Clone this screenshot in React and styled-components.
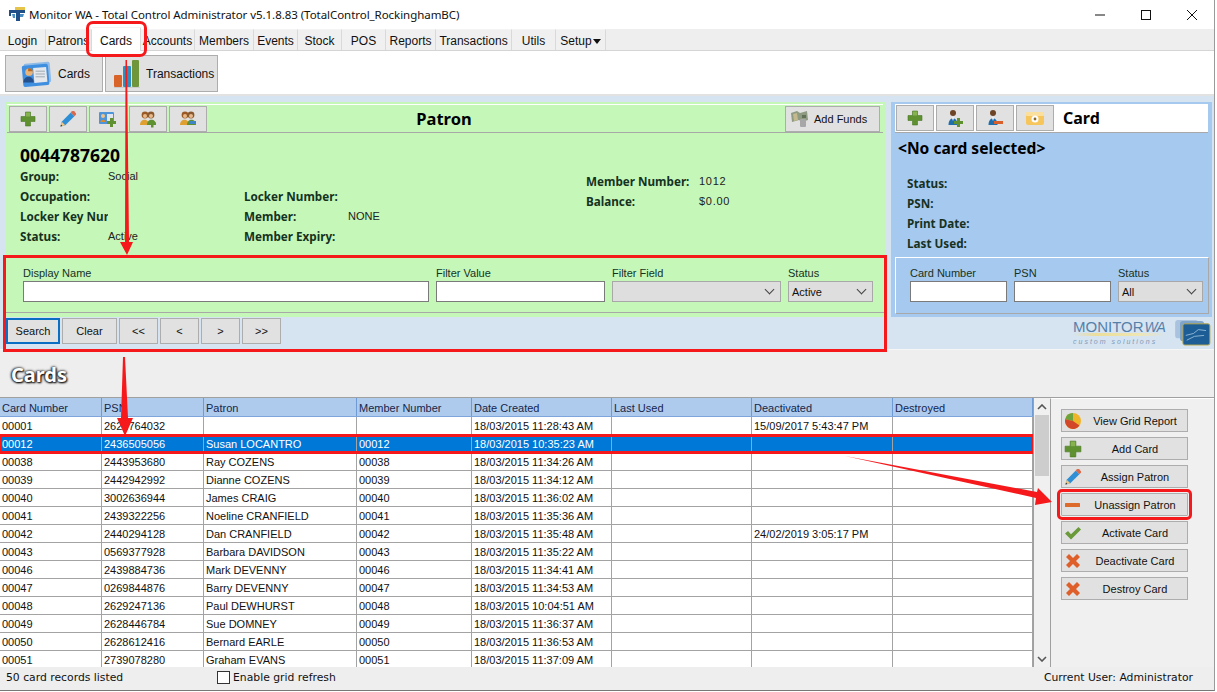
import React from 'react';
import styled, { createGlobalStyle } from 'styled-components';

const GlobalStyle = createGlobalStyle`
    html, body {
        margin: 0;
        padding: 0;
        background: #fff;
    }
    * {
        box-sizing: border-box;
    }
`;

const UI_FONT = `"Liberation Sans", Arial, sans-serif`;
const BOLD_FONT = `"Noto Sans", "Open Sans", sans-serif`;
const RED = '#f5191c';

/* ---------- icons ---------- */

const PlusIcon = ({ size = 16 }) => (
    <svg width={size} height={size} viewBox="0 0 16 16">
        <path d="M5.5 1h5v4.5H15v5h-4.5V15h-5v-4.5H1v-5h4.5z" fill="#5f9130" stroke="#4b7a25" strokeWidth="0.6" />
        <path d="M6 1.5h4v4H6z" fill="#86b34e" />
    </svg>
);

const PencilIcon = ({ size = 18 }) => (
    <svg width={size} height={size} viewBox="0 0 18 18">
        <path d="M1.5 16.5l1.2-4.8L11.8 2.6l3.6 3.6-9.1 9.1z" fill="#2f8fd6" />
        <path d="M1.5 16.5l1.2-4.8 3.6 3.6z" fill="#f3c77d" />
        <path d="M1.5 16.5l.5-2 1.5 1.5z" fill="#333" />
        <path d="M11.8 2.6l1.3-1.3c.6-.5 1.4-.5 2 0l1.6 1.6c.5.6.5 1.4 0 2l-1.3 1.3z" fill="#d9694a" />
    </svg>
);

const CardAddIcon = () => (
    <svg width="20" height="18" viewBox="0 0 20 18">
        <rect x="1" y="2" width="15" height="12" rx="1" fill="#4e94d8" />
        <rect x="9" y="4" width="6" height="7" fill="#dfe6ee" />
        <circle cx="5" cy="6" r="2" fill="#eec38a" />
        <path d="M2.5 12c0-3 5-3 5 0z" fill="#d98a2b" />
        <path d="M12 8h3v3h3v3h-3v3h-3v-3H9v-3h3z" fill="#5f9130" />
    </svg>
);

const PeopleIcon = ({ badge }) => (
    <svg width="20" height="18" viewBox="0 0 20 18">
        <circle cx="7" cy="5" r="3.4" fill="#9a5a26" />
        <circle cx="13" cy="5" r="3.4" fill="#8a5a2e" />
        <circle cx="7" cy="6" r="2" fill="#e8b98a" />
        <circle cx="13" cy="6" r="2" fill="#e8b98a" />
        <path d="M2 15c0-7 9-7 9 0z" fill="#e0a030" />
        <path d="M9 15c0-7 9-7 9 0z" fill="#5f9130" />
        {badge === 'add' ? (
            <path d="M13 10h2.5v2.5H18V15h-2.5v2.5H13V15h-2.5v-2.5H13z" fill="#5f9130" />
        ) : (
            <path d="M12 11h6v3h-6z" fill="#3f86c6" />
        )}
    </svg>
);

const PersonIcon = ({ badge }) => (
    <svg width="18" height="20" viewBox="0 0 18 20">
        <circle cx="7" cy="5" r="3" fill="#6d4526" />
        <path d="M2.5 17c0-9 9-9 9 0z" fill="#1f6fae" />
        <path d="M5.5 9h3l-1.5 4z" fill="#e9eef2" />
        {badge === 'add' ? (
            <path d="M11 10h3v3h3v3h-3v3h-3v-3H8v-3h3z" fill="#5f9130" />
        ) : (
            <path d="M8 13h9v3H8z" fill="#d9602a" />
        )}
    </svg>
);

const CameraCardIcon = () => (
    <svg width="20" height="16" viewBox="0 0 20 16">
        <rect x="1" y="2" width="18" height="13" rx="2" fill="#f6c65c" />
        <rect x="1" y="2" width="18" height="4" rx="1" fill="#fbdf9c" />
        <circle cx="10" cy="9" r="3.5" fill="#fff" />
        <circle cx="10" cy="9" r="1.4" fill="#8a6a2a" />
    </svg>
);

const MoneyIcon = () => (
    <svg width="20" height="20" viewBox="0 0 20 20">
        <path d="M1 4l6-2 3 2 7-2 1 9-6 2-3-2-7 2z" fill="#8f9a83" />
        <path d="M3 5l4-1 1 7-4 1z" fill="#c4b88c" />
        <rect x="10" y="10" width="6" height="8" rx="1" fill="#a7a7a7" />
        <path d="M12 6h4v3h-4z" fill="#62705a" />
    </svg>
);

const PieIcon = () => (
    <svg width="18" height="18" viewBox="0 0 18 18">
        <circle cx="9" cy="9" r="8" fill="#f0b429" />
        <path d="M9 9L1.2 7.2A8 8 0 0 1 9 1z" fill="#6da33c" />
        <path d="M9 9l6.5 4.6A8 8 0 0 1 1.2 7.2z" fill="#d2462a" />
    </svg>
);

const MinusIcon = () => (
    <svg width="18" height="18" viewBox="0 0 18 18">
        <rect x="1" y="7" width="15" height="4" rx="0.5" fill="#dd6a2a" />
    </svg>
);

const CheckIcon = () => (
    <svg width="18" height="18" viewBox="0 0 18 18">
        <path d="M1 9.5l3-2.5 3 3.2L14.5 3 17 5.5 7 15.5z" fill="#6a9a3a" />
    </svg>
);

const CrossIcon = () => (
    <svg width="16" height="16" viewBox="0 0 16 16">
        <path d="M1 4l3-3 4 4 4-4 3 3-4 4 4 4-3 3-4-4-4 4-3-3 4-4z" fill="#de5f2a" />
    </svg>
);

const CardsBigIcon = () => (
    <svg width="31" height="28" viewBox="0 0 32 30">
        <rect x="3" y="3" width="28" height="22" rx="2" fill="#8fbbe6" transform="rotate(-5 17 14)" />
        <rect x="1" y="5" width="28" height="23" rx="2" fill="#3f8fe0" transform="rotate(-5 15 16)" />
        <rect x="13" y="8" width="14" height="16" fill="#e4e8ec" transform="rotate(-5 20 16)" />
        <path d="M15 12h10M15 15h10M15 18h10" stroke="#9aa5ad" strokeWidth="1" />
        <circle cx="8" cy="13" r="4" fill="#e9b47a" />
        <path d="M7 9a4 4 0 0 1 5 3l-5 0z" fill="#b8681f" />
        <path d="M2 24c0-8 11-8 11 0z" fill="#234f8c" />
    </svg>
);

const BarsBigIcon = () => (
    <svg width="26" height="28" viewBox="0 0 26 28">
        <rect x="0" y="15" width="8" height="12" rx="1" fill="#d8642a" />
        <rect x="9" y="6" width="8" height="21" rx="1" fill="#2f8fbf" />
        <rect x="18" y="0" width="7" height="27" rx="1" fill="#70963c" />
        <path d="M0 27.5h26" stroke="#ccc" strokeWidth="1" />
    </svg>
);

const AppIcon = () => (
    <svg width="17" height="15" viewBox="0 0 17 15">
        <rect x="6" y="0" width="10" height="3" fill="#e6c44a" />
        <path d="M0 3h16v3h-5v8H7V6H2v3H0z" fill="#1f4f86" />
        <path d="M3 7h3v4H4z" fill="#4a8fc4" />
        <path d="M11 7h4l-1 3h-3z" fill="#4a8fc4" />
    </svg>
);

const LogoCardsIcon = () => (
    <svg width="37" height="27" viewBox="0 0 38 28">
        <rect x="0" y="1" width="24" height="19" rx="3" fill="#a9c2de" />
        <rect x="5" y="2" width="25" height="21" rx="3" fill="#7fa4cc" />
        <rect x="8" y="5" width="28" height="22" rx="2" fill="#1c5d96" stroke="#b9a94a" strokeWidth="1" />
        <path d="M11 17l8-2 5-4 8 1M12 22l8-4 10-1" stroke="#a9cbe4" strokeWidth="0.8" fill="none" />
    </svg>
);

/* ---------- page ---------- */

const menuItems = [
    ['Login', 46], ['Patrons', 46], ['Cards', 49], ['Accounts', 54], ['Members', 59],
    ['Events', 44], ['Stock', 44], ['POS', 44], ['Reports', 50], ['Transactions', 76],
    ['Utils', 44], ['Setup', 50],
];

const columns = ['Card Number', 'PSN', 'Patron', 'Member Number', 'Date Created', 'Last Used', 'Deactivated', 'Destroyed'];

const cards = [
    ['00001', '2621764032', '', '', '18/03/2015 11:28:43 AM', '', '15/09/2017 5:43:47 PM', ''],
    ['00012', '2436505056', 'Susan LOCANTRO', '00012', '18/03/2015 10:35:23 AM', '', '', ''],
    ['00038', '2443953680', 'Ray COZENS', '00038', '18/03/2015 11:34:26 AM', '', '', ''],
    ['00039', '2442942992', 'Dianne COZENS', '00039', '18/03/2015 11:34:12 AM', '', '', ''],
    ['00040', '3002636944', 'James CRAIG', '00040', '18/03/2015 11:36:02 AM', '', '', ''],
    ['00041', '2439322256', 'Noeline CRANFIELD', '00041', '18/03/2015 11:35:36 AM', '', '', ''],
    ['00042', '2440294128', 'Dan CRANFIELD', '00042', '18/03/2015 11:35:48 AM', '', '24/02/2019 3:05:17 PM', ''],
    ['00043', '0569377928', 'Barbara DAVIDSON', '00043', '18/03/2015 11:35:22 AM', '', '', ''],
    ['00046', '2439884736', 'Mark DEVENNY', '00046', '18/03/2015 11:34:41 AM', '', '', ''],
    ['00047', '0269844876', 'Barry DEVENNY', '00047', '18/03/2015 11:34:53 AM', '', '', ''],
    ['00048', '2629247136', 'Paul DEWHURST', '00048', '18/03/2015 10:04:51 AM', '', '', ''],
    ['00049', '2628446784', 'Sue DOMNEY', '00049', '18/03/2015 11:36:37 AM', '', '', ''],
    ['00050', '2628612416', 'Bernard EARLE', '00050', '18/03/2015 11:36:53 AM', '', '', ''],
    ['00051', '2739078280', 'Graham EVANS', '00051', '18/03/2015 11:37:09 AM', '', '', ''],
];

const actions = [
    ['View Grid Report', <PieIcon />],
    ['Add Card', <PlusIcon size={18} />],
    ['Assign Patron', <PencilIcon />],
    ['Unassign Patron', <MinusIcon />, true],
    ['Activate Card', <CheckIcon />],
    ['Deactivate Card', <CrossIcon />],
    ['Destroy Card', <CrossIcon />],
];

const App = () => {
    return (
        <React.Fragment>
            <GlobalStyle />
            <Screen>
                <Window>
                    <TitleBar>
                        <AppIcon />
                        <TitleText>Monitor WA - Total Control Administrator v5.1.8.83 (TotalControl_RockinghamBC)</TitleText>
                        <WindowControls>
                            <svg width="12" height="12" viewBox="0 0 12 12"><path d="M1 6h10" stroke="#111" /></svg>
                            <svg width="12" height="12" viewBox="0 0 12 12"><rect x="1.5" y="1.5" width="9" height="9" fill="none" stroke="#111" /></svg>
                            <svg width="12" height="12" viewBox="0 0 12 12"><path d="M1 1l10 10M11 1L1 11" stroke="#111" /></svg>
                        </WindowControls>
                    </TitleBar>

                    <MenuBar>
                        {menuItems.map(([label, width]) => (
                            <MenuTab key={label} $width={width} $active={label === 'Cards'}>
                                {label}
                                {label === 'Setup' && <SetupCaret />}
                            </MenuTab>
                        ))}
                    </MenuBar>

                    <Ribbon>
                        <RibbonButton $width={98} $pad={15}>
                            <CardsBigIcon />
                            Cards
                        </RibbonButton>
                        <RibbonButton $width={113} $pad={8}>
                            <BarsBigIcon />
                            Transactions
                        </RibbonButton>
                    </Ribbon>

                    <TopArea>
                        <LeftColumn>
                            <PatronPanel>
                                <PatronToolbar>
                                    <ToolButton><PlusIcon /></ToolButton>
                                    <ToolButton><PencilIcon /></ToolButton>
                                    <ToolButton><CardAddIcon /></ToolButton>
                                    <ToolButton><PeopleIcon badge="add" /></ToolButton>
                                    <ToolButton><PeopleIcon badge="link" /></ToolButton>
                                    <PanelTitle>Patron</PanelTitle>
                                    <AddFunds>
                                        <MoneyIcon />
                                        Add Funds
                                    </AddFunds>
                                </PatronToolbar>
                                <PatronBody>
                                    <PatronId>0044787620</PatronId>
                                    <PatronColumns>
                                        <InfoColumn $width={224}>
                                            <InfoRow>
                                                <InfoLabel $width={88}>Group:</InfoLabel>
                                                <InfoValue>Social</InfoValue>
                                            </InfoRow>
                                            <InfoRow><InfoLabel $width={88}>Occupation:</InfoLabel></InfoRow>
                                            <InfoRow>
                                                <InfoLabel $width={88}>Locker Key Number:</InfoLabel>
                                            </InfoRow>
                                            <InfoRow>
                                                <InfoLabel $width={88}>Status:</InfoLabel>
                                                <InfoValue>Active</InfoValue>
                                            </InfoRow>
                                        </InfoColumn>
                                        <InfoColumn $width={342} $offset={20}>
                                            <InfoRow><InfoLabel $width={104}>Locker Number:</InfoLabel></InfoRow>
                                            <InfoRow>
                                                <InfoLabel $width={104}>Member:</InfoLabel>
                                                <InfoValue>NONE</InfoValue>
                                            </InfoRow>
                                            <InfoRow><InfoLabel $width={104}>Member Expiry:</InfoLabel></InfoRow>
                                        </InfoColumn>
                                        <InfoColumn $width={200} $offset={5}>
                                            <InfoRow>
                                                <InfoLabel $width={113}>Member Number:</InfoLabel>
                                                <InfoValue $wide>1012</InfoValue>
                                            </InfoRow>
                                            <InfoRow>
                                                <InfoLabel $width={113}>Balance:</InfoLabel>
                                                <InfoValue $wide>$0.00</InfoValue>
                                            </InfoRow>
                                        </InfoColumn>
                                    </PatronColumns>
                                </PatronBody>
                            </PatronPanel>

                            <FilterBlock>
                                <PatronFilter>
                                    <Field $width={406}>
                                        <FieldLabel>Display Name</FieldLabel>
                                        <TextBox />
                                    </Field>
                                    <Field $width={169}>
                                        <FieldLabel>Filter Value</FieldLabel>
                                        <TextBox />
                                    </Field>
                                    <Field $width={169}>
                                        <FieldLabel>Filter Field</FieldLabel>
                                        <SelectBox />
                                    </Field>
                                    <Field $width={85}>
                                        <FieldLabel>Status</FieldLabel>
                                        <SelectBox>Active</SelectBox>
                                    </Field>
                                </PatronFilter>
                                <SearchRow>
                                    <SearchButton $width={54} $focused>Search</SearchButton>
                                    <SearchButton $width={55}>Clear</SearchButton>
                                    <SearchButton $width={39}>&lt;&lt;</SearchButton>
                                    <SearchButton $width={39}>&lt;</SearchButton>
                                    <SearchButton $width={39}>&gt;</SearchButton>
                                    <SearchButton $width={39}>&gt;&gt;</SearchButton>
                                </SearchRow>
                            </FilterBlock>
                        </LeftColumn>

                        <RightColumn>
                            <CardPanel>
                                <CardToolbar>
                                    <ToolButton><PlusIcon /></ToolButton>
                                    <ToolButton><PersonIcon badge="add" /></ToolButton>
                                    <ToolButton><PersonIcon badge="remove" /></ToolButton>
                                    <ToolButton><CameraCardIcon /></ToolButton>
                                    <CardTitle>Card</CardTitle>
                                </CardToolbar>
                                <NoCard>&lt;No card selected&gt;</NoCard>
                                <CardInfo>
                                    <InfoLabel>Status:</InfoLabel>
                                    <InfoLabel>PSN:</InfoLabel>
                                    <InfoLabel>Print Date:</InfoLabel>
                                    <InfoLabel>Last Used:</InfoLabel>
                                </CardInfo>
                                <CardFilter>
                                    <Field $width={97}>
                                        <FieldLabel>Card Number</FieldLabel>
                                        <TextBox />
                                    </Field>
                                    <Field $width={97}>
                                        <FieldLabel>PSN</FieldLabel>
                                        <TextBox />
                                    </Field>
                                    <Field $width={85}>
                                        <FieldLabel>Status</FieldLabel>
                                        <SelectBox>All</SelectBox>
                                    </Field>
                                </CardFilter>
                            </CardPanel>
                            <LogoRow>
                                <LogoText>
                                    <LogoName>MONITOR<LogoWa>WA</LogoWa></LogoName>
                                    <LogoTag>custom solutions</LogoTag>
                                </LogoText>
                                <LogoCardsIcon />
                            </LogoRow>
                        </RightColumn>
                    </TopArea>

                    <SectionBand>
                        <SectionTitle>Cards</SectionTitle>
                    </SectionBand>

                    <GridArea>
                        <Grid>
                            <GridHeader>
                                {columns.map((c) => <HeaderCell key={c}>{c}</HeaderCell>)}
                            </GridHeader>
                            {cards.map((card) => (
                                <GridRow key={card[0]} $selected={card[0] === '00012'}>
                                    {card.map((value, i) => <GridCell key={i}>{value}</GridCell>)}
                                </GridRow>
                            ))}
                        </Grid>
                        <ScrollBar>
                            <ScrollArrow>
                                <svg width="10" height="6" viewBox="0 0 10 6"><path d="M1 5l4-4 4 4" fill="none" stroke="#555" strokeWidth="1.6" /></svg>
                            </ScrollArrow>
                            <ScrollThumb />
                            <ScrollArrow $bottom>
                                <svg width="10" height="6" viewBox="0 0 10 6"><path d="M1 1l4 4 4-4" fill="none" stroke="#555" strokeWidth="1.6" /></svg>
                            </ScrollArrow>
                        </ScrollBar>
                        <ActionPanel>
                            {actions.map(([label, icon, marked]) => (
                                <ActionButton key={label} $marked={marked}>
                                    <ActionIcon>{icon}</ActionIcon>
                                    <ActionLabel>{label}</ActionLabel>
                                </ActionButton>
                            ))}
                        </ActionPanel>
                    </GridArea>

                    <StatusBar>
                        <StatusCount>50 card records listed</StatusCount>
                        <RefreshToggle>
                            <CheckBox />
                            Enable grid refresh
                        </RefreshToggle>
                        <StatusUser>Current User: Administrator</StatusUser>
                    </StatusBar>
                </Window>

                {/* red arrows drawn on top of the screenshot */}
                <Arrows viewBox="0 0 1217 692">
                    <polygon points="125.5,60 127,60 129,242 133,242 127,255 120,242 125,242" />
                    <polygon points="123,357 125,357 128,418 133,418 125,436 117,418 121,418" />
                    <polygon points="845,456 1037,492 1038,488 1052,502 1035,505 1036,498" />
                </Arrows>
            </Screen>
        </React.Fragment>
    );
};

const Screen = styled.div`
    position: relative;
    width: 1217px;
    height: 692px;
    overflow: hidden;
    background: #fff;
    font-family: ${UI_FONT};
    font-size: 11px;
    color: #111;
`;

const Window = styled.div`
    display: flex;
    flex-direction: column;
    width: 1215px;
    height: 691px;
    border-right: 1px solid #9a9a9a;
    border-bottom: 1px solid #777;
    background: #eee;
`;

const TitleBar = styled.div`
    display: flex;
    align-items: center;
    height: 29px;
    padding: 0 0 0 9px;
    background: #fff;
    flex: none;
`;

const TitleText = styled.div`
    margin-left: 3px;
    font-family: ${BOLD_FONT};
    font-size: 11.5px;
    letter-spacing: -0.05px;
`;

const WindowControls = styled.div`
    display: flex;
    align-items: center;
    gap: 34px;
    margin-left: auto;
    padding-right: 16px;
`;

const MenuBar = styled.div`
    display: flex;
    height: 22px;
    background: #eee;
    border-bottom: 1px solid #d4d4d4;
    font-size: 12px;
    flex: none;
`;

const MenuTab = styled.div`
    position: relative;
    display: flex;
    align-items: center;
    justify-content: center;
    width: ${(p) => p.$width}px;
    height: ${(p) => (p.$active ? '24px' : '21px')};
    margin-top: ${(p) => (p.$active ? '-2px' : '0')};
    padding-top: 2px;
    background: ${(p) => (p.$active ? '#fff' : '#f0f0f0')};
    border-right: 1px solid #d9d9d9;
    border-top: 1px solid #f4f4f4;
    white-space: nowrap;
    ${(p) => p.$active && `
        z-index: 2;
        outline: 3px solid ${RED};
        outline-offset: 3px;
        border-radius: 1px;
    `}
`;

const SetupCaret = styled.span`
    width: 0;
    height: 0;
    margin-left: 1px;
    border-left: 4px solid transparent;
    border-right: 4px solid transparent;
    border-top: 5px solid #111;
`;

const Ribbon = styled.div`
    display: flex;
    gap: 2px;
    height: 45px;
    padding: 4px 5px;
    background: #fff;
    border-bottom: 2px solid #e2e2e2;
    font-size: 12px;
    flex: none;
`;

const RibbonButton = styled.div`
    display: flex;
    align-items: center;
    gap: 6px;
    width: ${(p) => p.$width}px;
    height: 37px;
    padding: 1px 0 0 ${(p) => p.$pad}px;
    background: #e1e1e1;
    border: 1px solid #adadad;
`;

const TopArea = styled.div`
    display: flex;
    height: 254px;
    padding: 6px 2px 0 5px;
    gap: 6px;
    background: #d6e4f2;
    border-bottom: 1px solid #f6f6f6;
    flex: none;
`;

const LeftColumn = styled.div`
    display: flex;
    flex-direction: column;
    width: 880px;
`;

const PatronPanel = styled.div`
    height: 155px;
    padding: 2px 2px 0;
    background: #c5f7b9;
    flex: none;
`;

const PatronToolbar = styled.div`
    display: flex;
    align-items: center;
    gap: 2px;
    height: 29px;
    padding: 1px 3px 1px 2px;
    border-top: 1px solid #fff;
    border-bottom: 1px solid #a8a8a8;
`;

const ToolButton = styled.div`
    display: flex;
    align-items: center;
    justify-content: center;
    width: 38px;
    height: 26px;
    background: #e1e1e1;
    border: 1px solid #adadad;
`;

const PanelTitle = styled.div`
    flex: 1;
    padding-right: 104px;
    text-align: center;
    font-family: ${BOLD_FONT};
    font-size: 16.5px;
    font-weight: 700;
    color: #000;
`;

const AddFunds = styled.div`
    display: flex;
    align-items: center;
    gap: 4px;
    width: 95px;
    height: 26px;
    padding-left: 4px;
    background: #e1e1e1;
    border: 1px solid #adadad;
`;

const PatronBody = styled.div`
    padding: 11px 0 0 13px;
`;

const PatronId = styled.div`
    height: 22px;
    line-height: 22px;
    font-family: ${BOLD_FONT};
    font-size: 17.5px;
    font-weight: 700;
    color: #000;
`;

const PatronColumns = styled.div`
    display: flex;
`;

const InfoColumn = styled.div`
    width: ${(p) => p.$width}px;
    padding-top: ${(p) => p.$offset || 0}px;
`;

const InfoRow = styled.div`
    display: flex;
    height: 20px;
    line-height: 20px;
`;

const InfoLabel = styled.div`
    flex: none;
    width: ${(p) => (p.$width ? `${p.$width}px` : 'auto')};
    height: 20px;
    line-height: 20px;
    overflow: hidden;
    white-space: nowrap;
    font-family: ${BOLD_FONT};
    font-size: 11.7px;
    font-weight: 700;
    color: #16321f;
`;

const InfoValue = styled.div`
    color: #222;
    letter-spacing: ${(p) => (p.$wide ? '0.7px' : '0')};
`;

const FilterBlock = styled.div`
    position: relative;
    z-index: 1;
    outline: 3px solid ${RED};
    outline-offset: -1px;
    flex: none;
`;

const PatronFilter = styled.div`
    display: flex;
    gap: 7px;
    height: 60px;
    padding: 8px 12px 0 18px;
    background: #c5f7b9;
    box-shadow: inset 0 -4px 0 #c5f7b9, inset 0 -5px 0 #a8a8a8;
`;

const Field = styled.div`
    width: ${(p) => p.$width}px;
    flex: none;
`;

const FieldLabel = styled.div`
    height: 16px;
    line-height: 16px;
    color: #16321f;
    white-space: nowrap;
`;

const TextBox = styled.div`
    height: 21px;
    background: #fff;
    border: 1px solid #7a7a7a;
`;

const SelectBox = styled.div`
    position: relative;
    display: flex;
    align-items: center;
    height: 21px;
    padding-left: 3px;
    background: #dedede;
    border: 1px solid #a8a8a8;
    color: #111;
    &::after {
        content: '';
        position: absolute;
        right: 7px;
        top: 4px;
        width: 6px;
        height: 6px;
        border-right: 1px solid #444;
        border-bottom: 1px solid #444;
        transform: rotate(45deg);
    }
`;

const SearchRow = styled.div`
    display: flex;
    gap: 2px;
    height: 33px;
    padding: 1px 0 0 1px;
`;

const SearchButton = styled.div`
    display: flex;
    align-items: center;
    justify-content: center;
    width: ${(p) => p.$width}px;
    height: 26px;
    background: #e1e1e1;
    border: ${(p) => (p.$focused ? '2px solid #0a6fc2' : '1px solid #adadad')};
`;

const RightColumn = styled.div`
    display: flex;
    flex-direction: column;
    width: 321px;
`;

const CardPanel = styled.div`
    height: 215px;
    padding: 2px 4px 0;
    background: #a6c9ef;
    flex: none;
`;

const CardToolbar = styled.div`
    display: flex;
    align-items: center;
    gap: 2px;
    height: 29px;
    padding: 1px;
    background: #fff;
    border-bottom: 1px solid #a8a8a8;
`;

const CardTitle = styled.div`
    margin-left: 7px;
    font-family: ${BOLD_FONT};
    font-size: 16px;
    font-weight: 700;
    color: #000;
`;

const NoCard = styled.div`
    height: 30px;
    padding: 6px 0 0 3px;
    line-height: 18px;
    font-family: ${BOLD_FONT};
    font-size: 15.6px;
    font-weight: 700;
    color: #000;
`;

const CardInfo = styled.div`
    height: 94px;
    padding: 10px 0 0 12px;
`;

const CardFilter = styled.div`
    display: flex;
    gap: 7px;
    height: 57px;
    padding: 7px 0 0 14px;
    margin-right: -1px;
    border-top: 1px solid #fff;
    border-left: 1px solid #fff;
    border-bottom: 1px solid #a8a8a8;
    border-right: 1px solid #a8a8a8;
`;

const LogoRow = styled.div`
    display: flex;
    justify-content: flex-end;
    gap: 9px;
    padding-top: 2px;
`;

const LogoText = styled.div`
    width: 93px;
    opacity: 0.85;
`;

const LogoName = styled.div`
    height: 17px;
    line-height: 16px;
    font-size: 15px;
    color: #3f6f9e;
    white-space: nowrap;
    background: linear-gradient(90deg, transparent, #f0dc8a 25%, #f3e7a8 70%, transparent) no-repeat 0 100% / 100% 3px;
`;

const LogoWa = styled.span`
    margin-left: 1px;
    font-style: italic;
    font-size: 14px;
    letter-spacing: -1px;
`;

const LogoTag = styled.div`
    line-height: 11px;
    font-size: 7px;
    font-style: italic;
    letter-spacing: 2px;
    color: #6f8fae;
    white-space: nowrap;
`;

const SectionBand = styled.div`
    height: 47px;
    padding: 13px 0 0 11px;
    background: #eee;
    flex: none;
`;

const SectionTitle = styled.div`
    line-height: 24px;
    font-family: ${BOLD_FONT};
    font-size: 20px;
    font-weight: 700;
    color: #fff;
    text-shadow: 1px 1px 2px #000, -1px 0 2px #333, 0 0 3px #222;
`;

const GridArea = styled.div`
    display: flex;
    height: 270px;
    border-top: 1px solid #a0a0a0;
    background: #fff;
    flex: none;
`;

const Grid = styled.div`
    width: 1033px;
    overflow: hidden;
    flex: none;
`;

const GRID_COLUMNS = '102px 102px 153px 115px 140px 140px 141px 140px';

const GridHeader = styled.div`
    display: grid;
    grid-template-columns: ${GRID_COLUMNS};
    height: 19px;
    background: #aecbee;
    border-bottom: 1px solid #7ea6dc;
`;

const HeaderCell = styled.div`
    padding-left: 2px;
    line-height: 20px;
    border-right: 1px solid #6f9bd4;
    white-space: nowrap;
    overflow: hidden;
    color: #16264a;
`;

const GridRow = styled.div`
    position: relative;
    display: grid;
    grid-template-columns: ${GRID_COLUMNS};
    height: 18px;
    border-bottom: 1px solid #a3a3a3;
    background: ${(p) => (p.$selected ? '#0078d7' : '#fff')};
    color: ${(p) => (p.$selected ? '#fff' : '#111')};
    ${(p) => p.$selected && `
        z-index: 1;
        outline: 3px solid ${RED};
        outline-offset: -2px;
    `}
`;

const GridCell = styled.div`
    padding-left: 2px;
    line-height: 19px;
    border-right: 1px solid #a3a3a3;
    white-space: nowrap;
    overflow: hidden;
`;

const ScrollBar = styled.div`
    position: relative;
    width: 17px;
    padding: 0 1px;
    background: #f0f0f0;
    border-left: 1px solid #a0a0a0;
    flex: none;
`;

const ScrollArrow = styled.div`
    display: flex;
    align-items: center;
    justify-content: center;
    height: 17px;
    ${(p) => p.$bottom && `
        position: absolute;
        left: 0;
        right: 0;
        bottom: 0;
    `}
`;

const ScrollThumb = styled.div`
    height: 61px;
    background: #cdcdcd;
`;

const ActionPanel = styled.div`
    display: flex;
    flex-direction: column;
    gap: 5px;
    flex: 1;
    padding: 10px 0 0 10px;
    background: #f0f0f0;
    border-left: 1px solid #a0a0a0;
    border-top: 1px solid #fff;
`;

const ActionButton = styled.div`
    position: relative;
    display: flex;
    align-items: center;
    width: 127px;
    height: 23px;
    background: #e1e1e1;
    border: 1px solid #adadad;
    flex: none;
    ${(p) => p.$marked && `
        outline: 3px solid ${RED};
        outline-offset: 1px;
        border-radius: 1px;
    `}
`;

const ActionIcon = styled.div`
    display: flex;
    align-items: center;
    justify-content: center;
    width: 21px;
    height: 100%;
    flex: none;
`;

const ActionLabel = styled.div`
    flex: 1;
    text-align: center;
    white-space: nowrap;
`;

const StatusBar = styled.div`
    display: flex;
    align-items: center;
    flex: 1;
    padding: 0 0 2px 6px;
    font-family: "DejaVu Sans", sans-serif;
    font-size: 10.8px;
    background: #eee;
`;

const StatusCount = styled.div`
    width: 211px;
`;

const RefreshToggle = styled.div`
    display: flex;
    align-items: center;
    gap: 3px;
`;

const CheckBox = styled.div`
    width: 13px;
    height: 13px;
    background: #fff;
    border: 1px solid #333;
`;

const StatusUser = styled.div`
    margin-left: auto;
    padding-right: 21px;
`;

const Arrows = styled.svg`
    position: absolute;
    top: 0;
    left: 0;
    width: 1217px;
    height: 692px;
    z-index: 5;
    pointer-events: none;
    fill: ${RED};
`;

export default App;
